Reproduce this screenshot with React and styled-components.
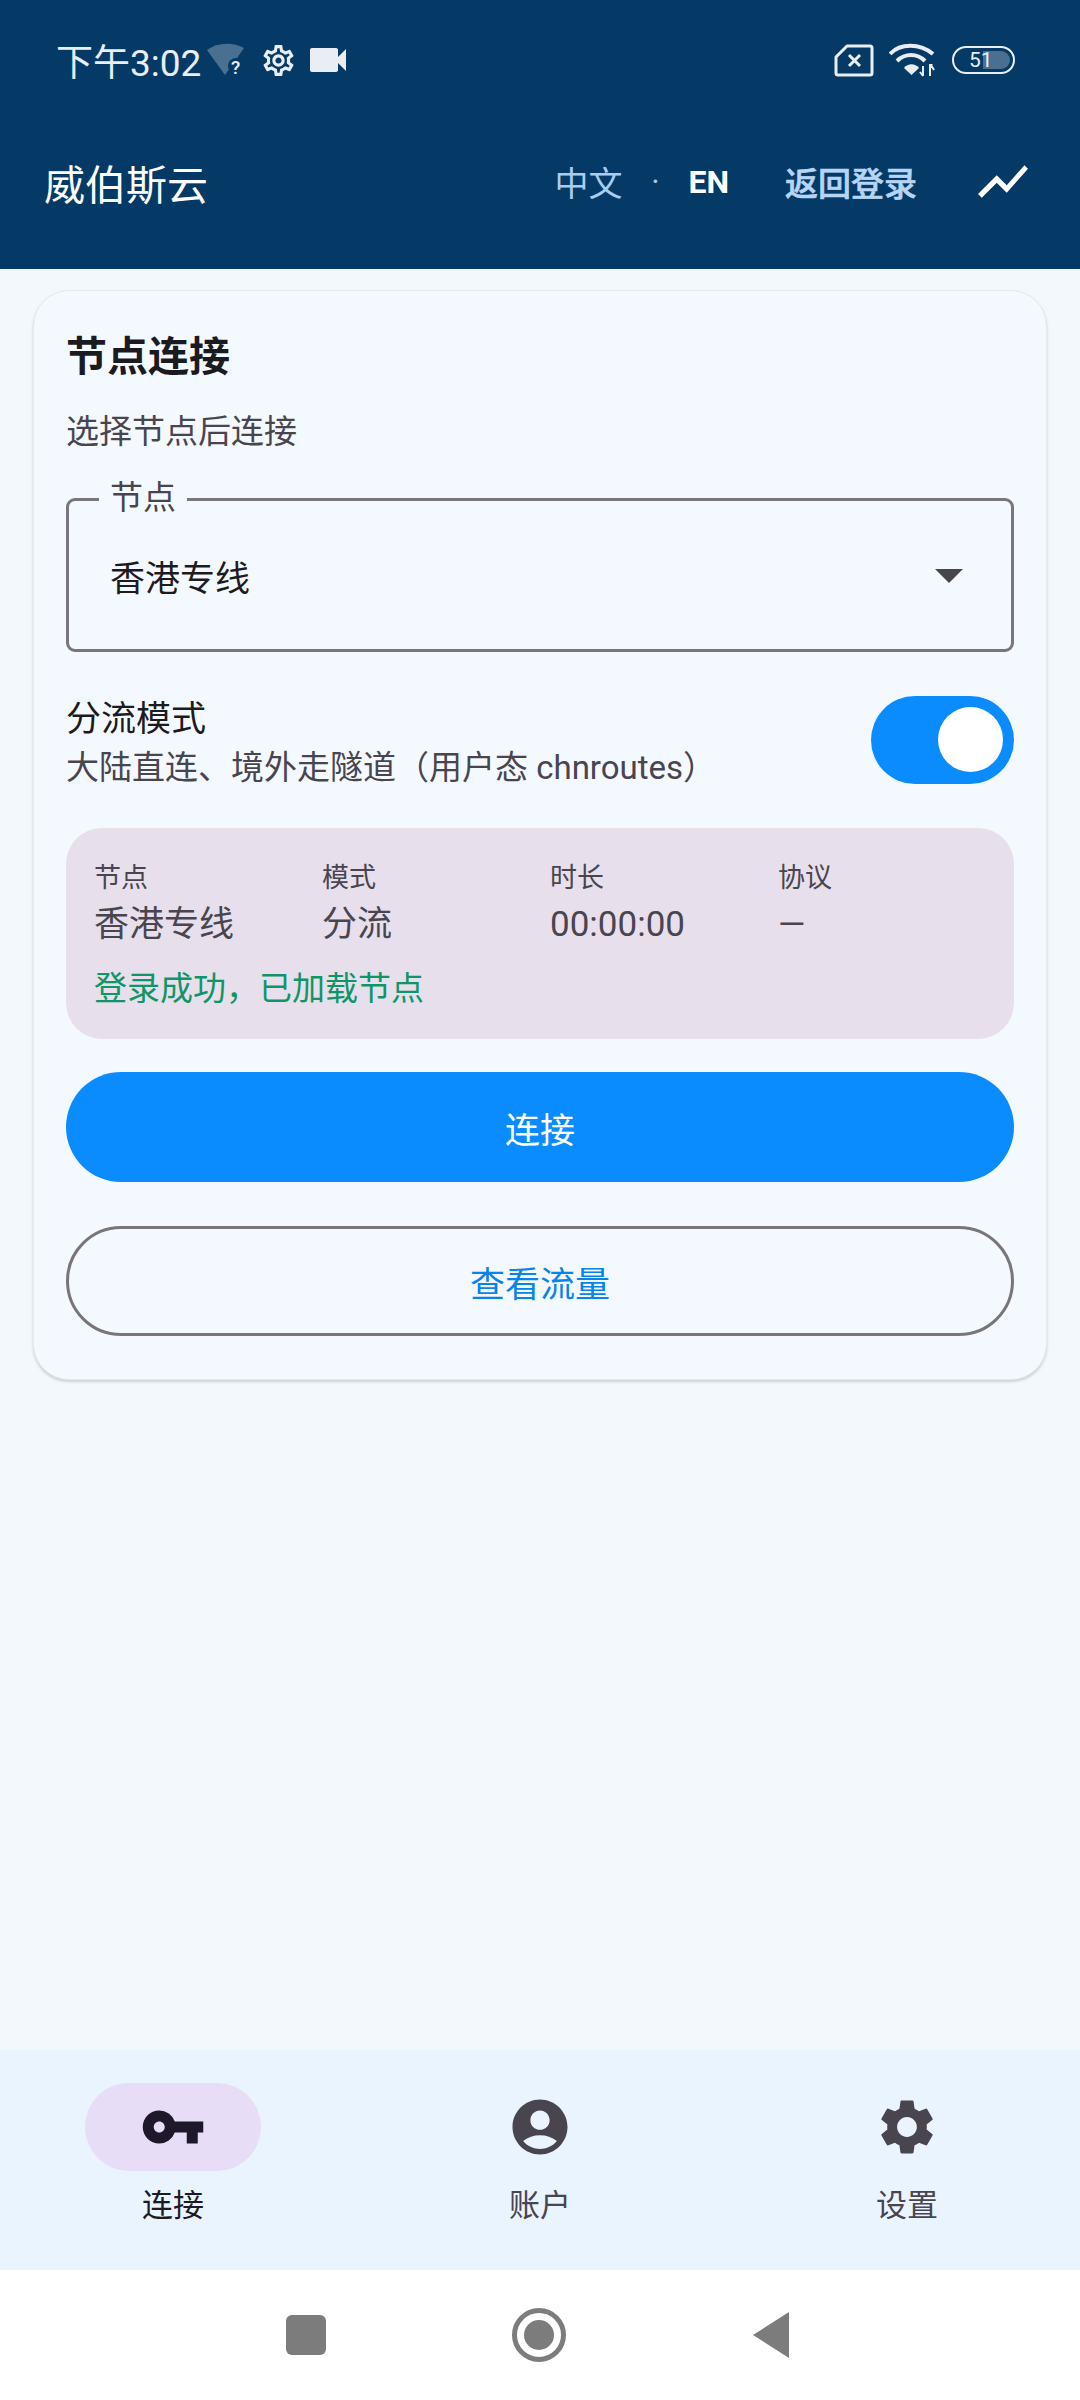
import React from "react";
import styled, { createGlobalStyle } from "styled-components";
import { MdVpnKey, MdAccountCircle, MdSettings, MdShowChart, MdVideocam, MdOutlineSettings } from "react-icons/md";

const FONT = `Roboto, "Noto Sans CJK SC", sans-serif`;

const stats = [
  { label: "节点", value: "香港专线" },
  { label: "模式", value: "分流" },
  { label: "时长", value: "00:00:00" },
  { label: "协议", value: "—" },
];

const tabs = [
  { label: "连接", Icon: MdVpnKey, active: true },
  { label: "账户", Icon: MdAccountCircle },
  { label: "设置", Icon: MdSettings },
];

const App = () => (
  <Page>
    <GlobalStyle />
    <Header>
      <StatusBar>
        <StatusGroup $gap="6px">
          <Clock>下午3:02</Clock>
          <WifiUnknown />
          <GearIcon size={37} />
          <VideoIcon size={48} />
        </StatusGroup>
        <StatusGroup $gap="15px">
          <SimOff />
          <WifiFull />
          <Battery>
            <BatteryLevel>51</BatteryLevel>
          </Battery>
        </StatusGroup>
      </StatusBar>
      <Toolbar>
        <AppTitle>威伯斯云</AppTitle>
        <ToolbarActions>
          <LangLink>中文</LangLink>
          <LangDot>·</LangDot>
          <LangLink $active>EN</LangLink>
          <BackLink>返回登录</BackLink>
          <TrendButton>
            <MdShowChart size={65} />
          </TrendButton>
        </ToolbarActions>
      </Toolbar>
    </Header>

    <Main>
      <Card>
        <CardTitle>节点连接</CardTitle>
        <CardHint>选择节点后连接</CardHint>
        <SelectField>
          <SelectLabel>节点</SelectLabel>
          <SelectValue>香港专线</SelectValue>
          <SelectCaret />
        </SelectField>
        <ModeRow>
          <ModeText>
            <ModeTitle>分流模式</ModeTitle>
            <ModeHint>大陆直连、境外走隧道（用户态 chnroutes）</ModeHint>
          </ModeText>
          <Toggle>
            <ToggleThumb />
          </Toggle>
        </ModeRow>
        <StatusPanel>
          <StatGrid>
            {stats.map((s) => (
              <div key={s.label}>
                <StatLabel>{s.label}</StatLabel>
                <StatValue>{s.value}</StatValue>
              </div>
            ))}
          </StatGrid>
          <SuccessText>登录成功，已加载节点</SuccessText>
        </StatusPanel>
        <PrimaryButton>连接</PrimaryButton>
        <OutlineButton>查看流量</OutlineButton>
      </Card>
    </Main>

    <BottomNav>
      {tabs.map(({ label, Icon, active }) => (
        <NavItem key={label}>
          <NavPill $active={active}>
            <Icon size={66} />
          </NavPill>
          <NavLabel $active={active}>{label}</NavLabel>
        </NavItem>
      ))}
    </BottomNav>

    <SystemNav>
      <RecentKey />
      <HomeKey />
      <BackKey />
    </SystemNav>
  </Page>
);

export default App;

const WifiUnknown = () => (
  <svg width="38" height="34" viewBox="0 0 38 34">
    <path d="M0 7C11 -1 26 -1 37 5L18 32Z" fill="#e8eef4" opacity="0.3" />
    <circle cx="29" cy="23" r="8" fill="#063a66" />
    <text x="24" y="31" fontFamily="Roboto, sans-serif" fontSize="19" fontWeight="500" fill="#e8eef4">
      ?
    </text>
  </svg>
);

const SimOff = () => (
  <svg width="40" height="33" viewBox="0 0 40 33">
    <path
      d="M13 2H36a2 2 0 0 1 2 2V29a2 2 0 0 1-2 2H4a2 2 0 0 1-2-2V13Z"
      fill="none"
      stroke="#e8eef4"
      strokeWidth="3"
      strokeLinejoin="round"
    />
    <path d="M15 11L26 22M26 11L15 22" stroke="#e8eef4" strokeWidth="3" />
  </svg>
);

const WifiFull = () => (
  <svg width="46" height="34" viewBox="0 0 46 34">
    <g fill="none" stroke="#e8eef4" strokeWidth="4">
      <path d="M1 11C11 0 31 0 44 11" />
      <path d="M8 18C16 10 28 10 36 18" />
    </g>
    <path d="M15 25C19 20 26 20 30 25L22.5 32Z" fill="#e8eef4" />
    <path d="M34 23V33M31 29L34 33M41 33V22H42.5V23L45 27" stroke="#e8eef4" strokeWidth="2" fill="none" />
  </svg>
);

const GlobalStyle = createGlobalStyle`
  html, body {
    margin: 0;
    padding: 0;
  }
  body {
    font-family: ${FONT};
  }
`;

const Page = styled.div`
  width: 1080px;
  height: 2400px;
  display: flex;
  flex-direction: column;
  background-color: #f3f8fd;
  overflow: hidden;
`;

const Header = styled.header`
  height: 269px;
  background-color: #063a66;
  display: flex;
  flex-direction: column;
`;

const StatusBar = styled.div`
  height: 120px;
  padding: 0 65px 0 56px;
  display: flex;
  justify-content: space-between;
  align-items: center;
  color: #e8eef4;
`;

const StatusGroup = styled.div`
  display: flex;
  align-items: center;
  gap: ${({ $gap }) => $gap};
`;

const Clock = styled.span`
  font-size: 37px;
  white-space: nowrap;
`;

const GearIcon = styled(MdOutlineSettings)`
  margin-left: 9px;
`;

const VideoIcon = styled(MdVideocam)`
  margin-left: 1px;
`;

const Battery = styled.div`
  position: relative;
  width: 63px;
  height: 28px;
  box-sizing: border-box;
  border: 2px solid #e8eef4;
  border-radius: 14px;
  display: flex;
  align-items: center;
  padding-left: 15px;
  margin-left: 2px;
  &::before {
    content: "";
    position: absolute;
    left: 29px;
    top: 3px;
    bottom: 3px;
    width: 27px;
    border-radius: 0 9px 9px 0;
    background-color: rgba(232, 238, 244, 0.3);
  }
`;

const BatteryLevel = styled.span`
  position: relative;
  font-size: 21px;
  line-height: 1;
`;

const Toolbar = styled.div`
  flex: 1;
  padding: 0 47px 26px 44px;
  display: flex;
  justify-content: space-between;
  align-items: center;
`;

const AppTitle = styled.div`
  font-size: 41px;
  color: #ffffff;
`;

const ToolbarActions = styled.div`
  display: flex;
  align-items: center;
`;

const LangLink = styled.span`
  font-size: ${({ $active }) => ($active ? "32px" : "34px")};
  font-weight: ${({ $active }) => ($active ? 700 : 400)};
  color: ${({ $active }) => ($active ? "#ffffff" : "#a9cdee")};
`;

const LangDot = styled.span`
  width: 66px;
  text-align: center;
  font-size: 32px;
  color: #a9cdee;
`;

const BackLink = styled.span`
  margin-left: 56px;
  font-size: 33px;
  font-weight: 500;
  color: #b6d5f5;
  -webkit-text-stroke: 0.6px #b6d5f5;
`;

const TrendButton = styled.span`
  margin-left: 56px;
  width: 60px;
  height: 60px;
  display: flex;
  align-items: center;
  justify-content: center;
  color: #ffffff;
`;

const Main = styled.main`
  flex: 1;
  padding: 21px 33px 0;
`;

const Card = styled.section`
  box-sizing: border-box;
  height: 1090px;
  padding: 31px 32px 0;
  border: 1px solid #e6e9ef;
  border-radius: 36px;
  background-color: #f4f9ff;
  box-shadow: 0 2px 3px rgba(0, 0, 0, 0.16);
`;

const CardTitle = styled.h2`
  margin: 0;
  font-size: 41px;
  line-height: 70px;
  font-weight: 700;
  color: #1b1b1f;
`;

const CardHint = styled.p`
  margin: 16px 0 0;
  font-size: 33px;
  line-height: 48px;
  color: #49454f;
`;

const SelectField = styled.div`
  position: relative;
  box-sizing: border-box;
  height: 154px;
  margin-top: 42px;
  padding: 0 48px 0 41px;
  border: 3px solid #79747e;
  border-radius: 9px;
  display: flex;
  align-items: center;
  justify-content: space-between;
`;

const SelectLabel = styled.span`
  position: absolute;
  left: 30px;
  top: -23px;
  padding: 0 11px;
  background-color: #f4f9ff;
  font-size: 33px;
  line-height: 40px;
  color: #49454f;
`;

const SelectValue = styled.span`
  font-size: 35px;
  color: #1d1b20;
`;

const SelectCaret = styled.span`
  width: 0;
  height: 0;
  margin-top: 2px;
  border-left: 14px solid transparent;
  border-right: 14px solid transparent;
  border-top: 14px solid #49454f;
`;

const ModeRow = styled.div`
  margin-top: 36px;
  display: flex;
  align-items: center;
  justify-content: space-between;
`;

const ModeText = styled.div`
  padding-top: 7px;
`;

const ModeTitle = styled.div`
  font-size: 35px;
  line-height: 50px;
  color: #1d1b20;
`;

const ModeHint = styled.div`
  font-size: 33px;
  line-height: 46px;
  color: #49454f;
`;

const Toggle = styled.div`
  width: 143px;
  height: 88px;
  padding-right: 11px;
  box-sizing: border-box;
  border-radius: 44px;
  background-color: #0a8cff;
  display: flex;
  align-items: center;
  justify-content: flex-end;
`;

const ToggleThumb = styled.span`
  width: 65px;
  height: 65px;
  border-radius: 50%;
  background-color: #ffffff;
`;

const StatusPanel = styled.div`
  box-sizing: border-box;
  height: 211px;
  margin-top: 37px;
  padding: 30px 28px 0;
  border-radius: 36px;
  background-color: #e7dfeb;
`;

const StatGrid = styled.div`
  display: grid;
  grid-template-columns: repeat(4, 228px);
`;

const StatLabel = styled.div`
  font-size: 27px;
  line-height: 41px;
  color: #49454f;
`;

const StatValue = styled.div`
  font-size: 35px;
  line-height: 50px;
  color: #49454f;
  padding-top: 1px;
`;

const SuccessText = styled.div`
  margin-top: 16px;
  font-size: 33px;
  line-height: 46px;
  color: #0f9668;
`;

const PrimaryButton = styled.button`
  display: block;
  width: 100%;
  height: 110px;
  margin-top: 33px;
  border: none;
  border-radius: 55px;
  background-color: #0a8cff;
  font-family: ${FONT};
  font-size: 35px;
  color: #ffffff;
`;

const OutlineButton = styled.button`
  display: block;
  width: 100%;
  height: 110px;
  margin-top: 44px;
  border: 3px solid #79747e;
  border-radius: 55px;
  background-color: transparent;
  font-family: ${FONT};
  font-size: 35px;
  color: #0a84e8;
`;

const BottomNav = styled.nav`
  height: 220px;
  padding: 33px 85px 0;
  box-sizing: border-box;
  background-color: #e9f4ff;
  display: flex;
  justify-content: space-between;
`;

const NavItem = styled.div`
  width: 176px;
  display: flex;
  flex-direction: column;
  align-items: center;
`;

const NavPill = styled.div`
  width: 176px;
  height: 88px;
  border-radius: 44px;
  background-color: ${({ $active }) => ($active ? "#e8ddf6" : "transparent")};
  color: ${({ $active }) => ($active ? "#1d192b" : "#49454f")};
  display: flex;
  align-items: center;
  justify-content: center;
`;

const NavLabel = styled.span`
  margin-top: 14px;
  font-size: 31px;
  line-height: 42px;
  color: ${({ $active }) => ($active ? "#1d1b20" : "#49454f")};
`;

const SystemNav = styled.div`
  height: 130px;
  background-color: #ffffff;
  padding-left: 286px;
  display: flex;
  align-items: center;
`;

const RecentKey = styled.span`
  width: 40px;
  height: 40px;
  border-radius: 6px;
  background-color: #7c7c7c;
`;

const HomeKey = styled.span`
  width: 54px;
  height: 54px;
  margin-left: 186px;
  box-sizing: border-box;
  border: 5px solid #7c7c7c;
  border-radius: 50%;
  display: flex;
  align-items: center;
  justify-content: center;
  &::after {
    content: "";
    width: 30px;
    height: 30px;
    border-radius: 50%;
    background-color: #7c7c7c;
  }
`;

const BackKey = styled.span`
  width: 0;
  height: 0;
  margin-left: 187px;
  border-top: 23px solid transparent;
  border-bottom: 23px solid transparent;
  border-right: 36px solid #7c7c7c;
`;
